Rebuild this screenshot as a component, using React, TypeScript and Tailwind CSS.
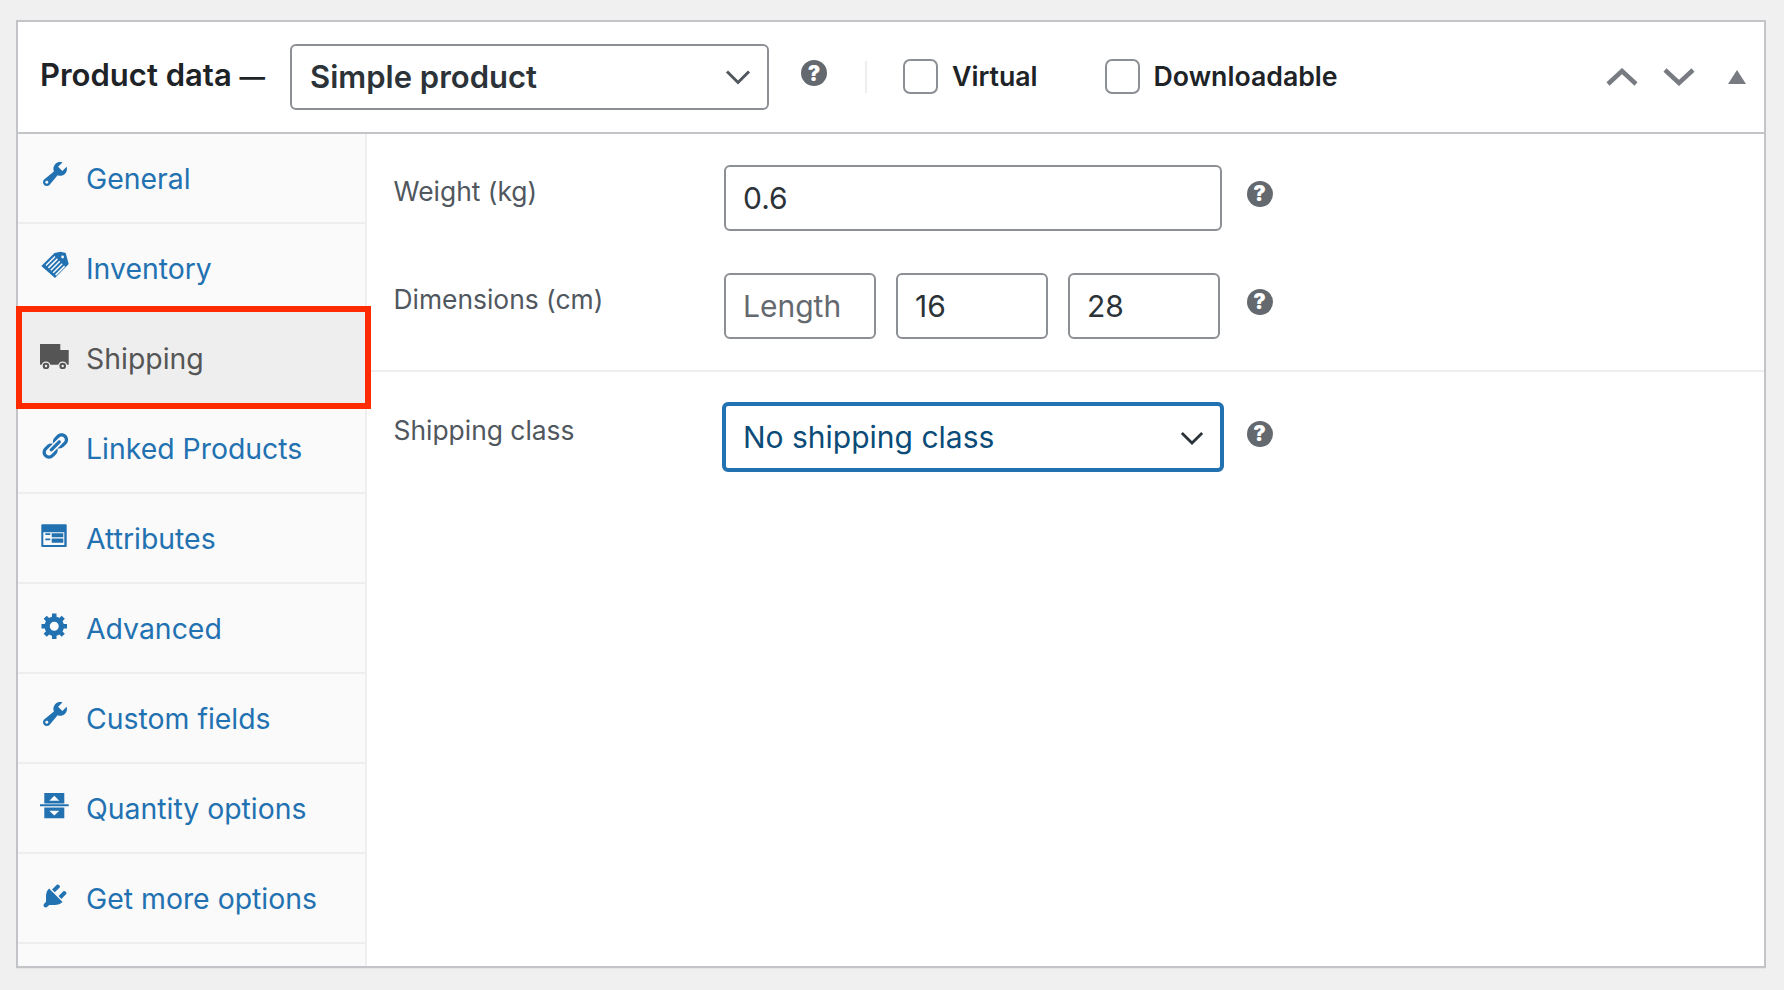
import React from "react";

const P: Record<string, [string, string]> = {
  wrench: ["0 0 20 20", "M16.68 9.77c-1.34 1.34-3.3 1.67-4.95.99l-5.41 6.52c-.99.99-2.59.99-3.58 0s-.99-2.59 0-3.58l6.52-5.41c-.68-1.65-.35-3.61.99-4.95 1.28-1.28 3.12-1.62 4.72-1.06l-2.89 2.89 2.82 2.82 2.86-2.87c.53 1.58.18 3.39-1.08 4.64zM3.81 16.21c.4.39 1.04.39 1.43 0 .4-.4.4-1.04 0-1.43-.39-.4-1.03-.4-1.43 0-.39.39-.39 1.03 0 1.43z"],
  gear: ["0 -1 20 20", "M18 12h-2.18c-.17.7-.44 1.35-.81 1.93l1.54 1.54-2.1 2.1-1.54-1.54c-.58.36-1.23.63-1.91.79V19H8v-2.18c-.68-.16-1.33-.43-1.91-.79l-1.54 1.54-2.12-2.12 1.54-1.54c-.36-.58-.63-1.23-.79-1.91H1V9.03h2.17c.16-.7.44-1.35.8-1.94L2.43 5.55l2.1-2.1 1.54 1.54c.58-.37 1.24-.64 1.93-.81V2h3v2.18c.68.16 1.33.43 1.91.79l1.54-1.54 2.12 2.12-1.54 1.54c.36.59.64 1.24.8 1.94H18V12zm-8.5 1.5c1.66 0 3-1.34 3-3s-1.34-3-3-3-3 1.34-3 3 1.34 3 3 3z"],
  link: ["0.3 -1.3 20 20", "M17.74 2.76c1.68 1.69 1.68 4.41 0 6.1l-1.53 1.52c-1.12 1.12-2.7 1.47-4.14 1.09l2.62-2.61.76-.77.76-.76c.84-.84.84-2.2 0-3.04-.84-.85-2.2-.85-3.04 0l-.77.76-3.38 3.38c-.37-1.44-.02-3.02 1.1-4.14l1.52-1.53c1.69-1.68 4.42-1.68 6.1 0zM8.59 13.43l5.34-5.34c.42-.42.42-1.1 0-1.52-.44-.43-1.13-.39-1.53 0l-5.33 5.34c-.42.42-.42 1.1 0 1.52.44.43 1.13.39 1.52 0zm-.76 2.29l4.14-4.15c.38 1.44.03 3.02-1.09 4.14l-1.52 1.53c-1.69 1.68-4.41 1.68-6.1 0-1.68-1.68-1.68-4.42 0-6.1l1.53-1.52c1.12-1.12 2.7-1.47 4.14-1.1l-4.14 4.15c-.85.84-.85 2.2 0 3.05.84.84 2.2.84 3.04 0z"],
  plug: ["0 -1.3 20 20", "M13.11 4.36L9.87 7.6 8 5.73l3.24-3.24c.35-.34 1.05-.2 1.56.32.52.51.66 1.21.31 1.55zm-8 1.77l.91-1.12 9.01 9.01-1.19.84c-.71.71-2.63 1.16-3.82 1.16H6.14L4.9 17.26c-.59.59-1.54.59-2.12 0-.59-.58-.59-1.53 0-2.12l1.24-1.24v-3.88c0-1.13.4-3.19 1.09-3.89zm7.26 3.97l3.24-3.24c.34-.35 1.04-.21 1.55.31.52.51.66 1.21.31 1.55l-3.24 3.25z"],
};

function Icon({ name }: { name: string }) {
  const cls = "mb-[8px] h-[30px] w-[30px] shrink-0";
  if (name === "tag") {
    return (
      <svg viewBox="0 0 30 30" className={cls} fill="currentColor">
        <path fillRule="evenodd" d="M1.3 17L14.5 4l6-1.2 5.2 1.2 1.2 4.5 1.8 6.5L15 29zM22.6 6.6a1.4 1.4 0 1 0 .01 2.8 1.4 1.4 0 0 0-.01-2.8z" />
        <g stroke="#fafafa" strokeWidth="1.5">
          <path d="M6 16.5l9-9M8.4 18.9l9-9M10.8 21.3l9-9M13.2 23.7l9-9M15.6 26.1l9-9" />
        </g>
      </svg>
    );
  }
  if (name === "truck") {
    return (
      <svg viewBox="0 0 30 30" className={cls} fill="currentColor">
        <path d="M0 5h20.3v6h8.4v14.7H0z" />
        <circle cx="6" cy="27" r="4.6" fill="#eeeeee" />
        <circle cx="22.7" cy="27" r="4.6" fill="#eeeeee" />
        <circle cx="6" cy="27" r="3.3" />
        <circle cx="22.7" cy="27" r="3.3" />
        <circle cx="6" cy="27" r="1.2" fill="#eeeeee" />
        <circle cx="22.7" cy="27" r="1.2" fill="#eeeeee" />
      </svg>
    );
  }
  if (name === "attrs") {
    return (
      <svg viewBox="0 0 30 30" className={cls} fill="currentColor">
        <path fillRule="evenodd" d="M2.3 5.3h23.4a1 1 0 0 1 1 1V27a1 1 0 0 1-1 1H2.3a1 1 0 0 1-1-1V6.3a1 1 0 0 1 1-1zM3.3 13.2V26h21V13.2z" />
        <path d="M5.3 14.2h5v1.7h-5zM5.3 19.6h5v1.7h-5zM11.7 14.2h11.6v4h-11.6zM11.7 19.6h11.6v4.2h-11.6z" />
      </svg>
    );
  }
  if (name === "qty") {
    return (
      <svg viewBox="0 0 30 30" className={cls} fill="currentColor">
        <path fillRule="evenodd" d="M4.3 4h20v10.5h-20zM14.3 6.7l-5 5h10zM0 15.3h28.7v2H0zM4.3 18.5h20v10.8h-20zM9.3 21.7h10l-5 4.8z" />
      </svg>
    );
  }
  const [vb, d] = P[name];
  return (
    <svg viewBox={vb} className={cls} fill="currentColor" fillRule="evenodd">
      <path d={d} />
    </svg>
  );
}

function Help({ className = "" }: { className?: string }) {
  return (
    <span className={`flex h-[26px] w-[26px] shrink-0 items-center justify-center rounded-full bg-[#646970] text-[21px] leading-none font-black text-white ${className}`}>
      ?
    </span>
  );
}

function Chevron({ className }: { className: string }) {
  return (
    <svg viewBox="0 0 26 16" className={className} fill="none" stroke="currentColor" strokeWidth="3">
      <path d="M2 2.5l11 11 11-11" />
    </svg>
  );
}

const tabs = [
  ["General", "wrench"],
  ["Inventory", "tag"],
  ["Shipping", "truck"],
  ["Linked Products", "link"],
  ["Attributes", "attrs"],
  ["Advanced", "gear"],
  ["Custom fields", "wrench"],
  ["Quantity options", "qty"],
  ["Get more options", "plug"],
];

const inputCls =
  "h-[66px] rounded-[6px] border-2 border-[#8c8f94] bg-white px-[17px] text-[30px] text-[#2c3338] outline-none placeholder:text-[#646970]";

export default function App() {
  return (
    <div className="h-[990px] bg-[#f0f0f1] pt-[20px] pl-[16px] font-['Inter','Liberation_Sans',sans-serif]">
      <div className="relative flex h-[948px] w-[1750px] flex-col border-2 border-[#c3c4c7] bg-white shadow-[0_1px_1px_rgba(0,0,0,0.04)]">
        <header className="flex h-[112px] shrink-0 items-center border-b-2 border-[#c3c4c7] pl-[22px] text-[#1d2327]">
          <h2 className="mb-[3px] w-[229px] text-[31px] font-semibold whitespace-nowrap">
            Product data <span className="text-[25.5px]">—</span>
          </h2>
          <div className="ml-[21px] flex h-[66px] w-[479px] items-center justify-between rounded-[6px] border-2 border-[#8c8f94] pr-[16px] pl-[18px] text-[31px] font-semibold text-[#2c3338]">
            Simple product
            <Chevron className="h-[16px] w-[26px] text-[#50575e]" />
          </div>
          <Help className="mb-[8px] ml-[32px]" />
          <span className="ml-[38px] h-[32px] w-[2px] bg-[#eeeeee]" />
          <label className="mb-[1px] ml-[36px] flex items-center gap-[14px] text-[26.7px] font-semibold">
            <span className="h-[35px] w-[35px] rounded-[7px] border-2 border-[#8c8f94] bg-white" />
            Virtual
          </label>
          <label className="mb-[1px] ml-[67px] flex items-center gap-[14px] text-[26.7px] font-semibold">
            <span className="h-[35px] w-[35px] rounded-[7px] border-2 border-[#8c8f94] bg-white" />
            Downloadable
          </label>
          <div className="ml-auto flex items-center pr-[18px] text-[#787c82]">
            <svg viewBox="0 0 32 18" className="h-[18px] w-[32px]" fill="none" stroke="currentColor" strokeWidth="4.5"><path d="M2 16L16 3l14 13" /></svg>
            <svg viewBox="0 0 32 18" className="ml-[25px] h-[18px] w-[32px]" fill="none" stroke="currentColor" strokeWidth="4.5"><path d="M2 2l14 13L30 2" /></svg>
            <svg viewBox="0 0 18 14" className="ml-[33px] h-[14px] w-[18px]" fill="currentColor"><path d="M9 0l9 14H0z" /></svg>
          </div>
        </header>
        <div className="flex min-h-0 flex-1">
          <nav className="w-[349px] shrink-0 border-r-2 border-[#eeeeee] bg-[#fafafa]">
            {tabs.map(([label, icon]) => {
              const active = label === "Shipping";
              return (
                <div
                  key={label}
                  className={`flex h-[90px] items-center border-b-2 border-[#eeeeee] pl-[22px] text-[28.4px] ${active ? "bg-[#eeeeee] text-[#555555]" : "text-[#2271b1]"}`}
                >
                  <Icon name={icon} />
                  <span className="mt-[2px] ml-[16px] whitespace-nowrap">{label}</span>
                </div>
              );
            })}
          </nav>
          <main className="min-w-0 flex-1 text-[26.4px] text-[#50575e]">
            <div className="border-b-2 border-[#eeeeee] pb-[31px]">
              <div className="flex pt-[30.5px]">
                <span className="w-[357px] pt-[7px] pl-[26.5px]">Weight (kg)</span>
                <input readOnly value="0.6" className={`${inputCls} w-[497.5px]`} />
                <Help className="mt-[16px] ml-[25px]" />
              </div>
              <div className="mt-[42px] flex">
                <span className="w-[357px] pt-[7px] pl-[26.5px]">Dimensions (cm)</span>
                <div className="flex w-[497.5px] gap-[20px]">
                  <input readOnly placeholder="Length" className={`${inputCls} w-[152px]`} />
                  <input readOnly value="16" className={`${inputCls} w-[152px]`} />
                  <input readOnly value="28" className={`${inputCls} w-[152px]`} />
                </div>
                <Help className="mt-[16px] ml-[25px]" />
              </div>
            </div>
            <div className="flex pt-[30px]">
              <span className="w-[355px] pt-[9px] pl-[26.5px]">Shipping class</span>
              <div className="flex h-[70px] w-[502px] items-center justify-between rounded-[6px] border-[4px] border-[#2271b1] pt-[2px] pr-[16px] pl-[17px] text-[30px] text-[#0a4b78]">
                No shipping class
                <Chevron className="h-[16px] w-[24px] text-[#2c3338]" />
              </div>
              <Help className="mt-[19px] ml-[22.5px]" />
            </div>
          </main>
        </div>
        <div className="absolute top-[284px] left-[-2px] h-[103px] w-[355px] border-[6px] border-[#ff2a00]" />
      </div>
    </div>
  );
}
